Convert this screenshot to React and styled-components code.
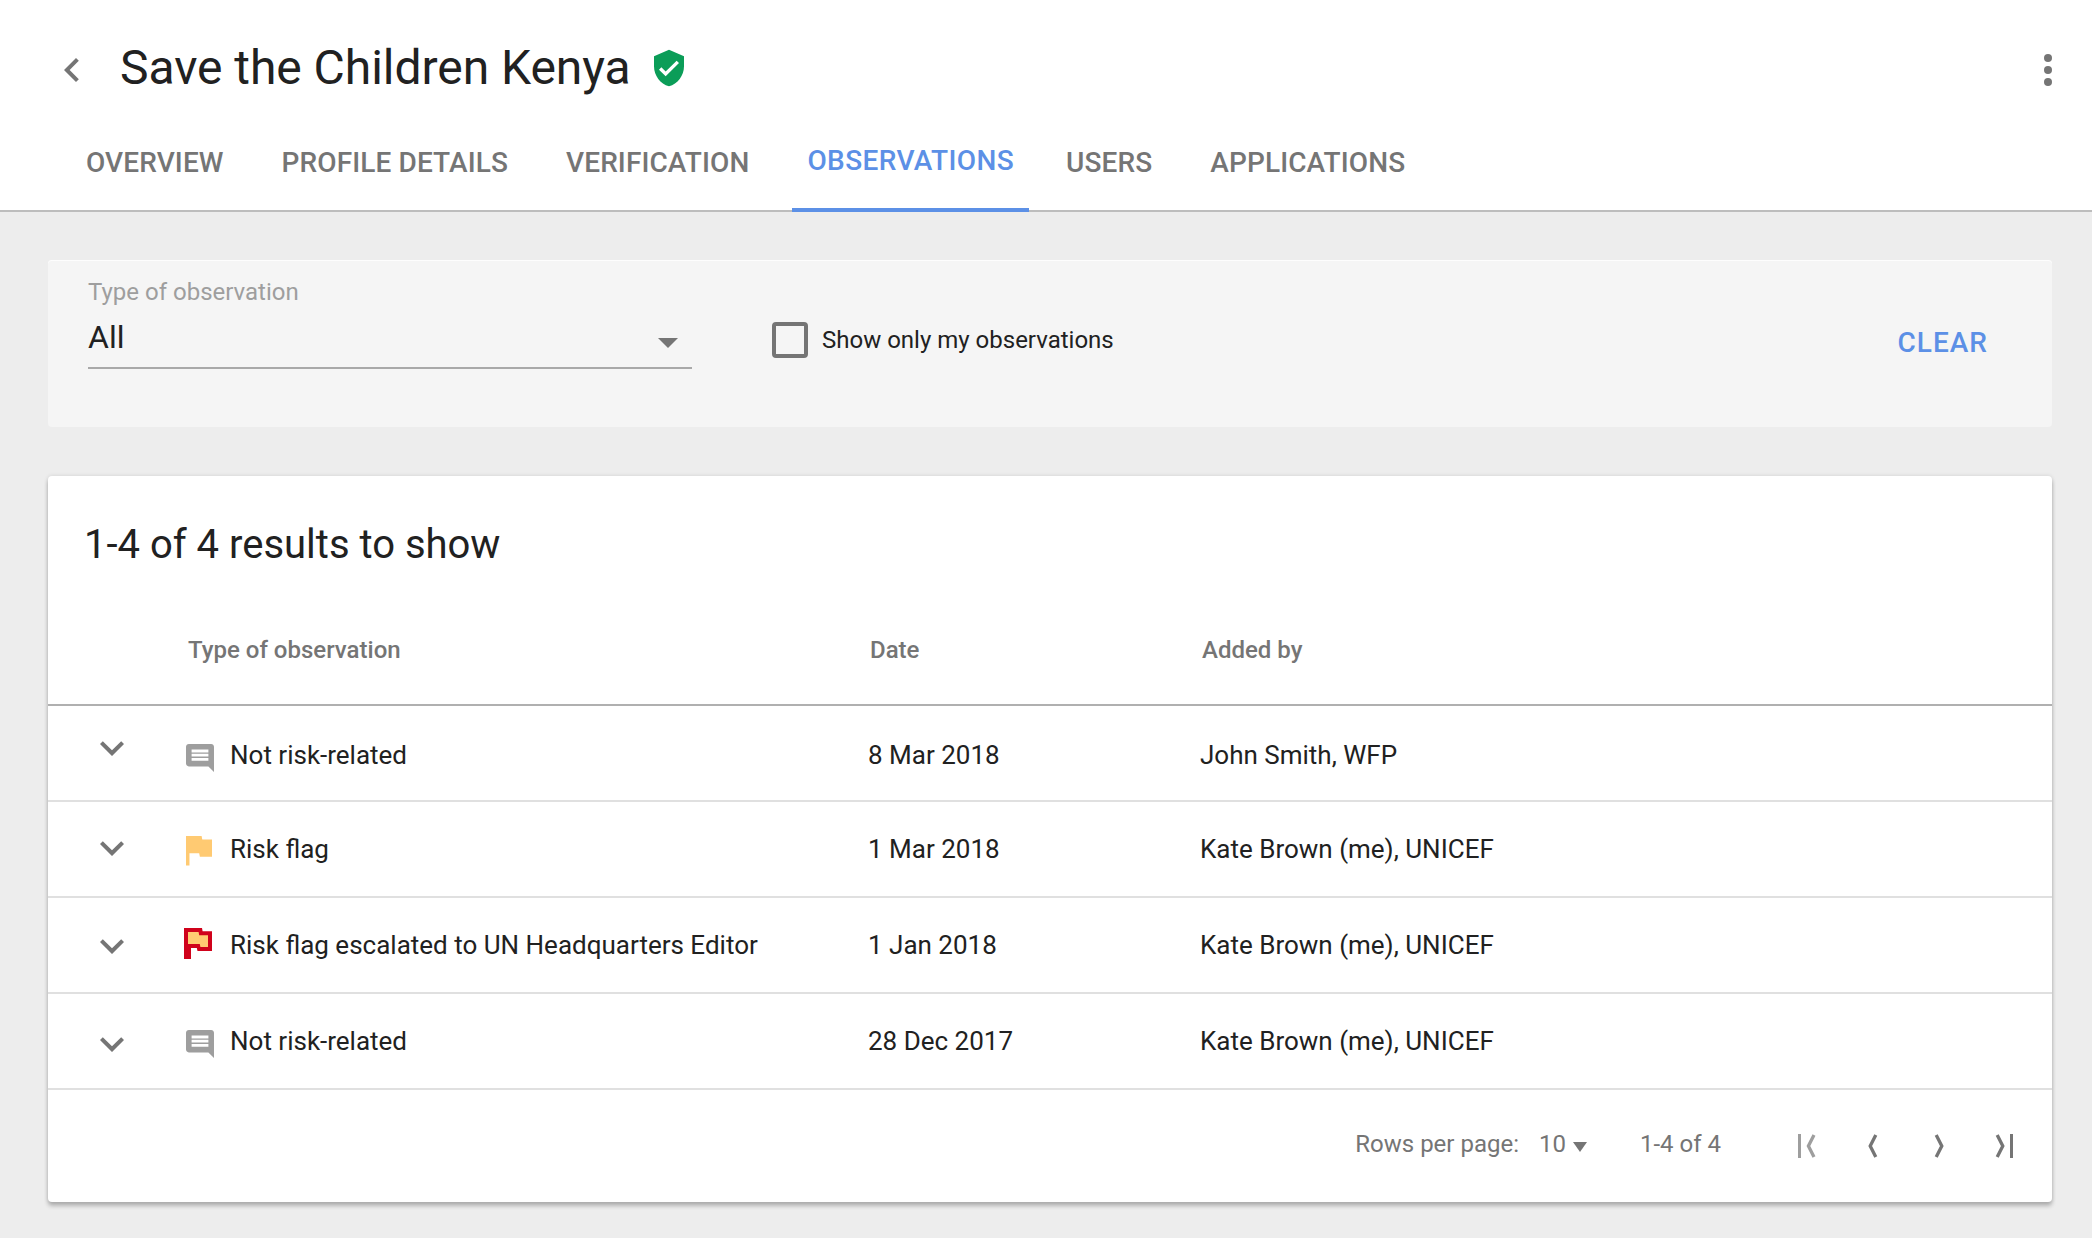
import React from "react";
import styled, { createGlobalStyle } from "styled-components";

const color = {
  text: "#212121",
  muted: "#757575",
  faint: "#9e9e9e",
  blue: "#5c90e6",
  green: "#0b9d58",
  amber: "#ffca72",
  red: "#d0021b",
};

const GlobalStyle = createGlobalStyle`
  * { box-sizing: border-box; }
  body {
    margin: 0;
    background: #ededed;
    color: ${color.text};
    font-family: Roboto, "Liberation Sans", sans-serif;
  }
  svg { display: block; flex: none; }
`;

const Page = styled.div`
  min-height: 1238px;
  background: #ededed;
`;

/* ---------- header ---------- */

const Header = styled.header`
  display: flex;
  flex-direction: column;
  justify-content: space-between;
  height: 212px;
  background: #fff;
  box-shadow: inset 0 -2px 0 #bdbdbd;
`;

const TitleBar = styled.div`
  display: flex;
  align-items: flex-start;
  padding: 39px 20px 0 48px;
`;

const IconButton = styled.button`
  flex: none;
  margin: ${(p) => p.$top || 0}px 0 0 ${(p) => p.$before || 0}px;
  padding: 0;
  border: 0;
  background: none;
  color: ${(p) => (p.$disabled ? color.faint : color.muted)};
`;

const PageTitle = styled.h1`
  margin: 0 18px 0 24px;
  font-size: 48px;
  font-weight: 400;
  line-height: 57px;
  letter-spacing: -0.05px;
  white-space: nowrap;
`;

const Verified = styled.span`
  margin-top: 9px;
  color: ${color.green};
`;

const Spacer = styled.div`
  flex: 1;
`;

const Tabs = styled.nav`
  display: flex;
  align-items: flex-end;
  padding-left: 57px;
`;

const Tab = styled.a`
  padding: 0 ${(p) => (p.$active ? 15 : 29)}px ${(p) => (p.$active ? 31 : 33)}px;
  margin: ${(p) => (p.$active ? "0 8px 0 14px" : "0")};
  border-bottom: ${(p) => (p.$active ? `4px solid ${color.blue}` : "0")};
  color: ${(p) => (p.$active ? color.blue : color.muted)};
  font-size: 28px;
  font-weight: 500;
  line-height: 33px;
  letter-spacing: ${(p) => (p.$active ? 0.38 : 0.11)}px;
  white-space: nowrap;
`;

/* ---------- filter ---------- */

const Main = styled.main`
  display: flex;
  flex-direction: column;
  gap: 49px;
  padding: 48px 40px 36px 48px;
`;

const FilterCard = styled.section`
  display: flex;
  align-items: flex-start;
  height: 167px;
  padding: 18px 64px 0 40px;
  border-radius: 4px;
  background: #f5f5f5;
  box-shadow: inset 0 1px 0 #fdfdfd;
`;

const Field = styled.div`
  width: 604px;
`;

const FieldLabel = styled.div`
  color: ${color.faint};
  font-size: 24px;
  line-height: 28px;
`;

const Select = styled.div`
  display: flex;
  justify-content: space-between;
  margin-top: 12px;
  padding: 0 14px 11px 0;
  border-bottom: 2px solid #a9a9a9;
  font-size: 32px;
  line-height: 38px;
`;

const Caret = styled.span`
  padding-top: ${(p) => p.$top}px;
  color: ${color.muted};
`;

const CheckLabel = styled.label`
  display: flex;
  align-items: center;
  gap: 14px;
  margin: 44px 0 0 80px;
  font-size: 24px;
  line-height: 28px;
`;

const CheckBox = styled.span`
  width: 36px;
  height: 36px;
  border: 4px solid ${color.muted};
  border-radius: 4px;
`;

const ClearButton = styled.button`
  margin: 48px 0 0;
  padding: 0;
  border: 0;
  background: none;
  color: ${color.blue};
  font: 500 28px/33px Roboto, "Liberation Sans", sans-serif;
  letter-spacing: 1px;
`;

/* ---------- results ---------- */

const ResultsCard = styled.section`
  height: 726px;
  padding-top: 45px;
  border-radius: 4px;
  background: #fff;
  box-shadow: 0 0 4px rgba(0, 0, 0, 0.12), 0 4px 4px rgba(0, 0, 0, 0.24);
`;

const ResultsTitle = styled.h2`
  margin: 0;
  padding-left: 36px;
  font-size: 40px;
  font-weight: 400;
  line-height: 47px;
`;

const Row = styled.div`
  display: grid;
  grid-template-columns: 136px 684px 332px 1fr;
  align-items: start;
  height: 96px;
  border-bottom: 2px solid #e0e0e0;
  font-size: 26px;
  line-height: 30px;
`;

const HeadRow = styled(Row)`
  height: 138px;
  padding-top: 68px;
  border-bottom-color: #b0b0b0;
  color: ${color.muted};
  font-size: 24px;
  font-weight: 500;
  line-height: 28px;
`;

const HeadCell = styled.div`
  grid-column: ${(p) => p.$col};
  padding-left: ${(p) => p.$inset}px;
`;

const ExpandCell = styled.div`
  padding: ${(p) => p.$top}px 0 0 40px;
  color: ${color.muted};
`;

const Cell = styled.div`
  display: flex;
  align-items: flex-start;
  padding-top: ${(p) => p.$top}px;
  white-space: nowrap;
`;

const IconSlot = styled.span`
  width: 46px;
  height: 30px;
  padding-left: ${(p) => p.$left}px;
  margin-top: ${(p) => p.$top}px;
`;

/* ---------- pagination ---------- */

const Pagination = styled.footer`
  display: flex;
  justify-content: flex-end;
  padding: 40px 39px 0 0;
  color: ${color.muted};
  font-size: 24px;
  line-height: 28px;
`;

const PageSize = styled.div`
  display: flex;
  gap: 7px;
  margin: 0 53px 0 20px;
`;

const Pager = styled.div`
  display: flex;
  margin: 4px 0 0 77px;
`;

/* ---------- icons ---------- */

const BackIcon = () => (
  <svg width="48" height="48" viewBox="0 0 24 24" fill="currentColor">
    <path d="M15.41 7.41L14 6l-6 6 6 6 1.41-1.41L10.83 12z" />
  </svg>
);

const ShieldIcon = () => (
  <svg width="40" height="40" viewBox="0 0 24 24" fill="currentColor">
    <path d="M12 1L3 5v6c0 5.55 3.84 10.74 9 12 5.16-1.26 9-6.45 9-12V5l-9-4zm-2 16l-4-4 1.41-1.41L10 14.17l6.59-6.59L18 9l-8 8z" />
  </svg>
);

const MoreIcon = () => (
  <svg width="48" height="48" viewBox="0 0 24 24" fill="currentColor">
    <circle cx="12" cy="6" r="2" />
    <circle cx="12" cy="12" r="2" />
    <circle cx="12" cy="18" r="2" />
  </svg>
);

const ExpandIcon = () => (
  <svg width="48" height="48" viewBox="0 0 24 24" fill="currentColor">
    <path d="M16.59 8.59L12 13.17 7.41 8.59 6 10l6 6 6-6z" />
  </svg>
);

const CaretIcon = ({ width, height }) => (
  <svg width={width} height={height} viewBox="0 0 10 5" preserveAspectRatio="none" fill="currentColor">
    <path d="M0 0l5 5 5-5z" />
  </svg>
);

const CommentIcon = () => (
  <svg width="28" height="28" viewBox="2 2 20 20" fill={color.faint}>
    <path d="M21.99 4c0-1.1-.89-2-1.99-2H4c-1.1 0-2 .9-2 2v12c0 1.1.9 2 2 2h14l4 4-.01-18zM18 14H6v-2h12v2zm0-3H6V9h12v2zm0-3H6V6h12v2z" />
  </svg>
);

const FlagIcon = () => (
  <svg width="26" height="29.5" viewBox="5 4 15 17" fill={color.amber}>
    <path d="M14.4 6L14 4H5v17h2v-7h5.6l.4 2h7V6z" />
  </svg>
);

const EscalatedFlagIcon = () => (
  <svg width="28" height="31" viewBox="0 0 28 31">
    <path fill={color.red} d="M0 0h18l.6 3.3H28V23H13.5l-.7-3H7v11H0z" />
    <path fill={color.amber} d="M4 4h10.6l.6 3.2H24V19h-7.6l-.6-3H4z" />
  </svg>
);

const PrevIcon = () => (
  <svg width="11" height="24" viewBox="0 0 11 24" fill="none" stroke="currentColor" strokeWidth="3.3">
    <path d="M8.8 1L3.2 12 8.8 23" />
  </svg>
);

const NextIcon = () => (
  <svg width="11" height="24" viewBox="0 0 11 24" fill="none" stroke="currentColor" strokeWidth="3.3">
    <path d="M2.2 1L7.8 12 2.2 23" />
  </svg>
);

const FirstIcon = () => (
  <svg width="18" height="24" viewBox="0 0 18 24" fill="none" stroke="currentColor" strokeWidth="3.3">
    <path d="M1.5 0v24" strokeWidth="3" />
    <path d="M16 1L10.4 12 16 23" />
  </svg>
);

const LastIcon = () => (
  <svg width="18" height="24" viewBox="0 0 18 24" fill="none" stroke="currentColor" strokeWidth="3.3">
    <path d="M16.5 0v24" strokeWidth="3" />
    <path d="M2.2 1L7.8 12 2.2 23" />
  </svg>
);

/* ---------- data ---------- */

const tabs = ["OVERVIEW", "PROFILE DETAILS", "VERIFICATION", "OBSERVATIONS", "USERS", "APPLICATIONS"];

const kinds = {
  comment: { Icon: CommentIcon, top: 4, left: 2 },
  flag: { Icon: FlagIcon, top: 2, left: 2 },
  escalated: { Icon: EscalatedFlagIcon, top: -2, left: 0 },
};

const rows = [
  { kind: "comment", type: "Not risk-related", date: "8 Mar 2018", by: "John Smith, WFP", top: 34, arrow: 18 },
  { kind: "flag", type: "Risk flag", date: "1 Mar 2018", by: "Kate Brown (me), UNICEF", top: 32, arrow: 22 },
  { kind: "escalated", type: "Risk flag escalated to UN Headquarters Editor", date: "1 Jan 2018", by: "Kate Brown (me), UNICEF", top: 32, arrow: 24 },
  { kind: "comment", type: "Not risk-related", date: "28 Dec 2017", by: "Kate Brown (me), UNICEF", top: 32, arrow: 26 },
];

const ObservationRow = ({ row }) => {
  const { Icon, top, left } = kinds[row.kind];
  return (
    <Row>
      <ExpandCell $top={row.arrow}><ExpandIcon /></ExpandCell>
      <Cell $top={row.top}>
        <IconSlot $top={top} $left={left}><Icon /></IconSlot>
        {row.type}
      </Cell>
      <Cell $top={row.top}>{row.date}</Cell>
      <Cell $top={row.top}>{row.by}</Cell>
    </Row>
  );
};

export default function App() {
  return (
    <Page>
      <GlobalStyle />
      <Header>
        <TitleBar>
          <IconButton $top={7} aria-label="Back"><BackIcon /></IconButton>
          <PageTitle>Save the Children Kenya</PageTitle>
          <Verified><ShieldIcon /></Verified>
          <Spacer />
          <IconButton $top={7} aria-label="More"><MoreIcon /></IconButton>
        </TitleBar>
        <Tabs>
          {tabs.map((name) => (
            <Tab key={name} $active={name === "OBSERVATIONS"}>{name}</Tab>
          ))}
        </Tabs>
      </Header>
      <Main>
        <FilterCard>
          <Field>
            <FieldLabel>Type of observation</FieldLabel>
            <Select>
              All
              <Caret $top={20}><CaretIcon width={20} height={10} /></Caret>
            </Select>
          </Field>
          <CheckLabel><CheckBox />Show only my observations</CheckLabel>
          <Spacer />
          <ClearButton>CLEAR</ClearButton>
        </FilterCard>
        <ResultsCard>
          <ResultsTitle>1-4 of 4 results to show</ResultsTitle>
          <HeadRow>
            <HeadCell $col={2} $inset={4}>Type of observation</HeadCell>
            <HeadCell $col={3} $inset={2}>Date</HeadCell>
            <HeadCell $col={4} $inset={2}>Added by</HeadCell>
          </HeadRow>
          {rows.map((row) => <ObservationRow key={row.date} row={row} />)}
          <Pagination>
            <span>Rows per page:</span>
            <PageSize>
              10
              <Caret $top={12}><CaretIcon width={14} height={10} /></Caret>
            </PageSize>
            <span>1-4 of 4</span>
            <Pager>
              <IconButton $disabled aria-label="First page"><FirstIcon /></IconButton>
              <IconButton $before={51} aria-label="Previous page"><PrevIcon /></IconButton>
              <IconButton $before={56} aria-label="Next page"><NextIcon /></IconButton>
              <IconButton $before={50} aria-label="Last page"><LastIcon /></IconButton>
            </Pager>
          </Pagination>
        </ResultsCard>
      </Main>
    </Page>
  );
}
